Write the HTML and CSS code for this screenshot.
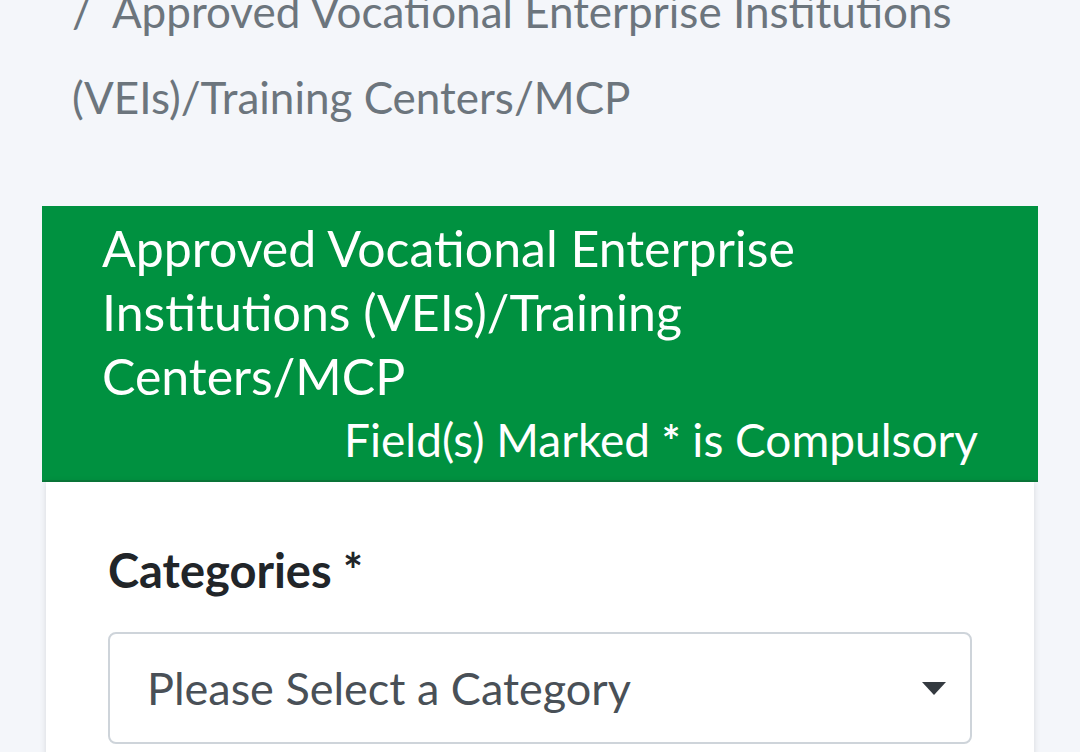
FILE: index.html
```html
<!DOCTYPE html>
<html lang="en">
<head>
    <meta charset="UTF-8">
    <meta name="viewport" content="width=device-width, initial-scale=1.0">
    <title>Approved VEIs / Training Centers / MCP</title>
    <link rel="stylesheet" href="styles.css">
</head>
<body>
    <nav class="breadcrumb">
        <span class="crumb-sep">/</span>Approved Vocational Enterprise Institutions (VEIs)/Training Centers/MCP
    </nav>

    <div class="card">
        <div class="card-header">
            <h2 class="card-title">Approved Vocational Enterprise Institutions (VEIs)/Training Centers/MCP</h2>
            <p class="card-note">Field(s) Marked <b>*</b> is Compulsory</p>
        </div>
        <div class="card-body">
            <label class="field-label" for="category">Categories *</label>
            <div class="select-wrap">
                <select id="category" name="category">
                    <option value="">Please Select a Category</option>
                </select>
                <span class="select-arrow"></span>
            </div>
        </div>
    </div>
</body>
</html>
```

FILE: styles.css
```css
/* page */
body {
    margin: 0;
    padding: 0 42px;
    background-color: #f4f6fa;
    font-family: Lato, "Open Sans", sans-serif;
    color: #212529;
    overflow: hidden;
}

.breadcrumb {
    margin-top: -32px;
    padding-left: 30px;
    font-size: 44px;
    line-height: 86px;
    color: #6c757d;
}

.crumb-sep {
    padding-right: 20px;
}

.card {
    margin-top: 66px;
}

.card-header {
    background-color: #009140;
    border-bottom: 2px solid #0a7a3a;
    color: #fff;
    padding: 10px 60px 8px 60px;
}

.card-title {
    margin: 0;
    font-size: 50px;
    font-weight: normal;
    line-height: 64px;
}

.card-note {
    margin: 0;
    text-align: right;
    font-size: 46px;
    line-height: 64px;
}

.card-note b {
    font-size: 44px;
}

.card-body {
    background-color: #fff;
    margin: 0 4px;
    padding: 58px 62px 40px 62px;
    box-shadow: 0 0 6px rgba(0, 0, 0, 0.12);
}

.field-label {
    display: block;
    font-size: 47px;
    font-weight: bold;
    line-height: 60px;
    margin-bottom: 32px;
}

.select-wrap {
    position: relative;
}

select {
    width: 100%;
    height: 112px;
    padding: 0 37px;
    font-family: Lato, "Open Sans", sans-serif;
    font-size: 45px;
    color: #495057;
    background-color: #fff;
    border: 2px solid #ced4da;
    border-radius: 8px;
    appearance: none;
    -webkit-appearance: none;
}

.select-arrow {
    position: absolute;
    right: 26px;
    top: 50px;
    width: 0;
    height: 0;
    border-left: 12px solid transparent;
    border-right: 12px solid transparent;
    border-top: 13px solid #343a40;
}
```
